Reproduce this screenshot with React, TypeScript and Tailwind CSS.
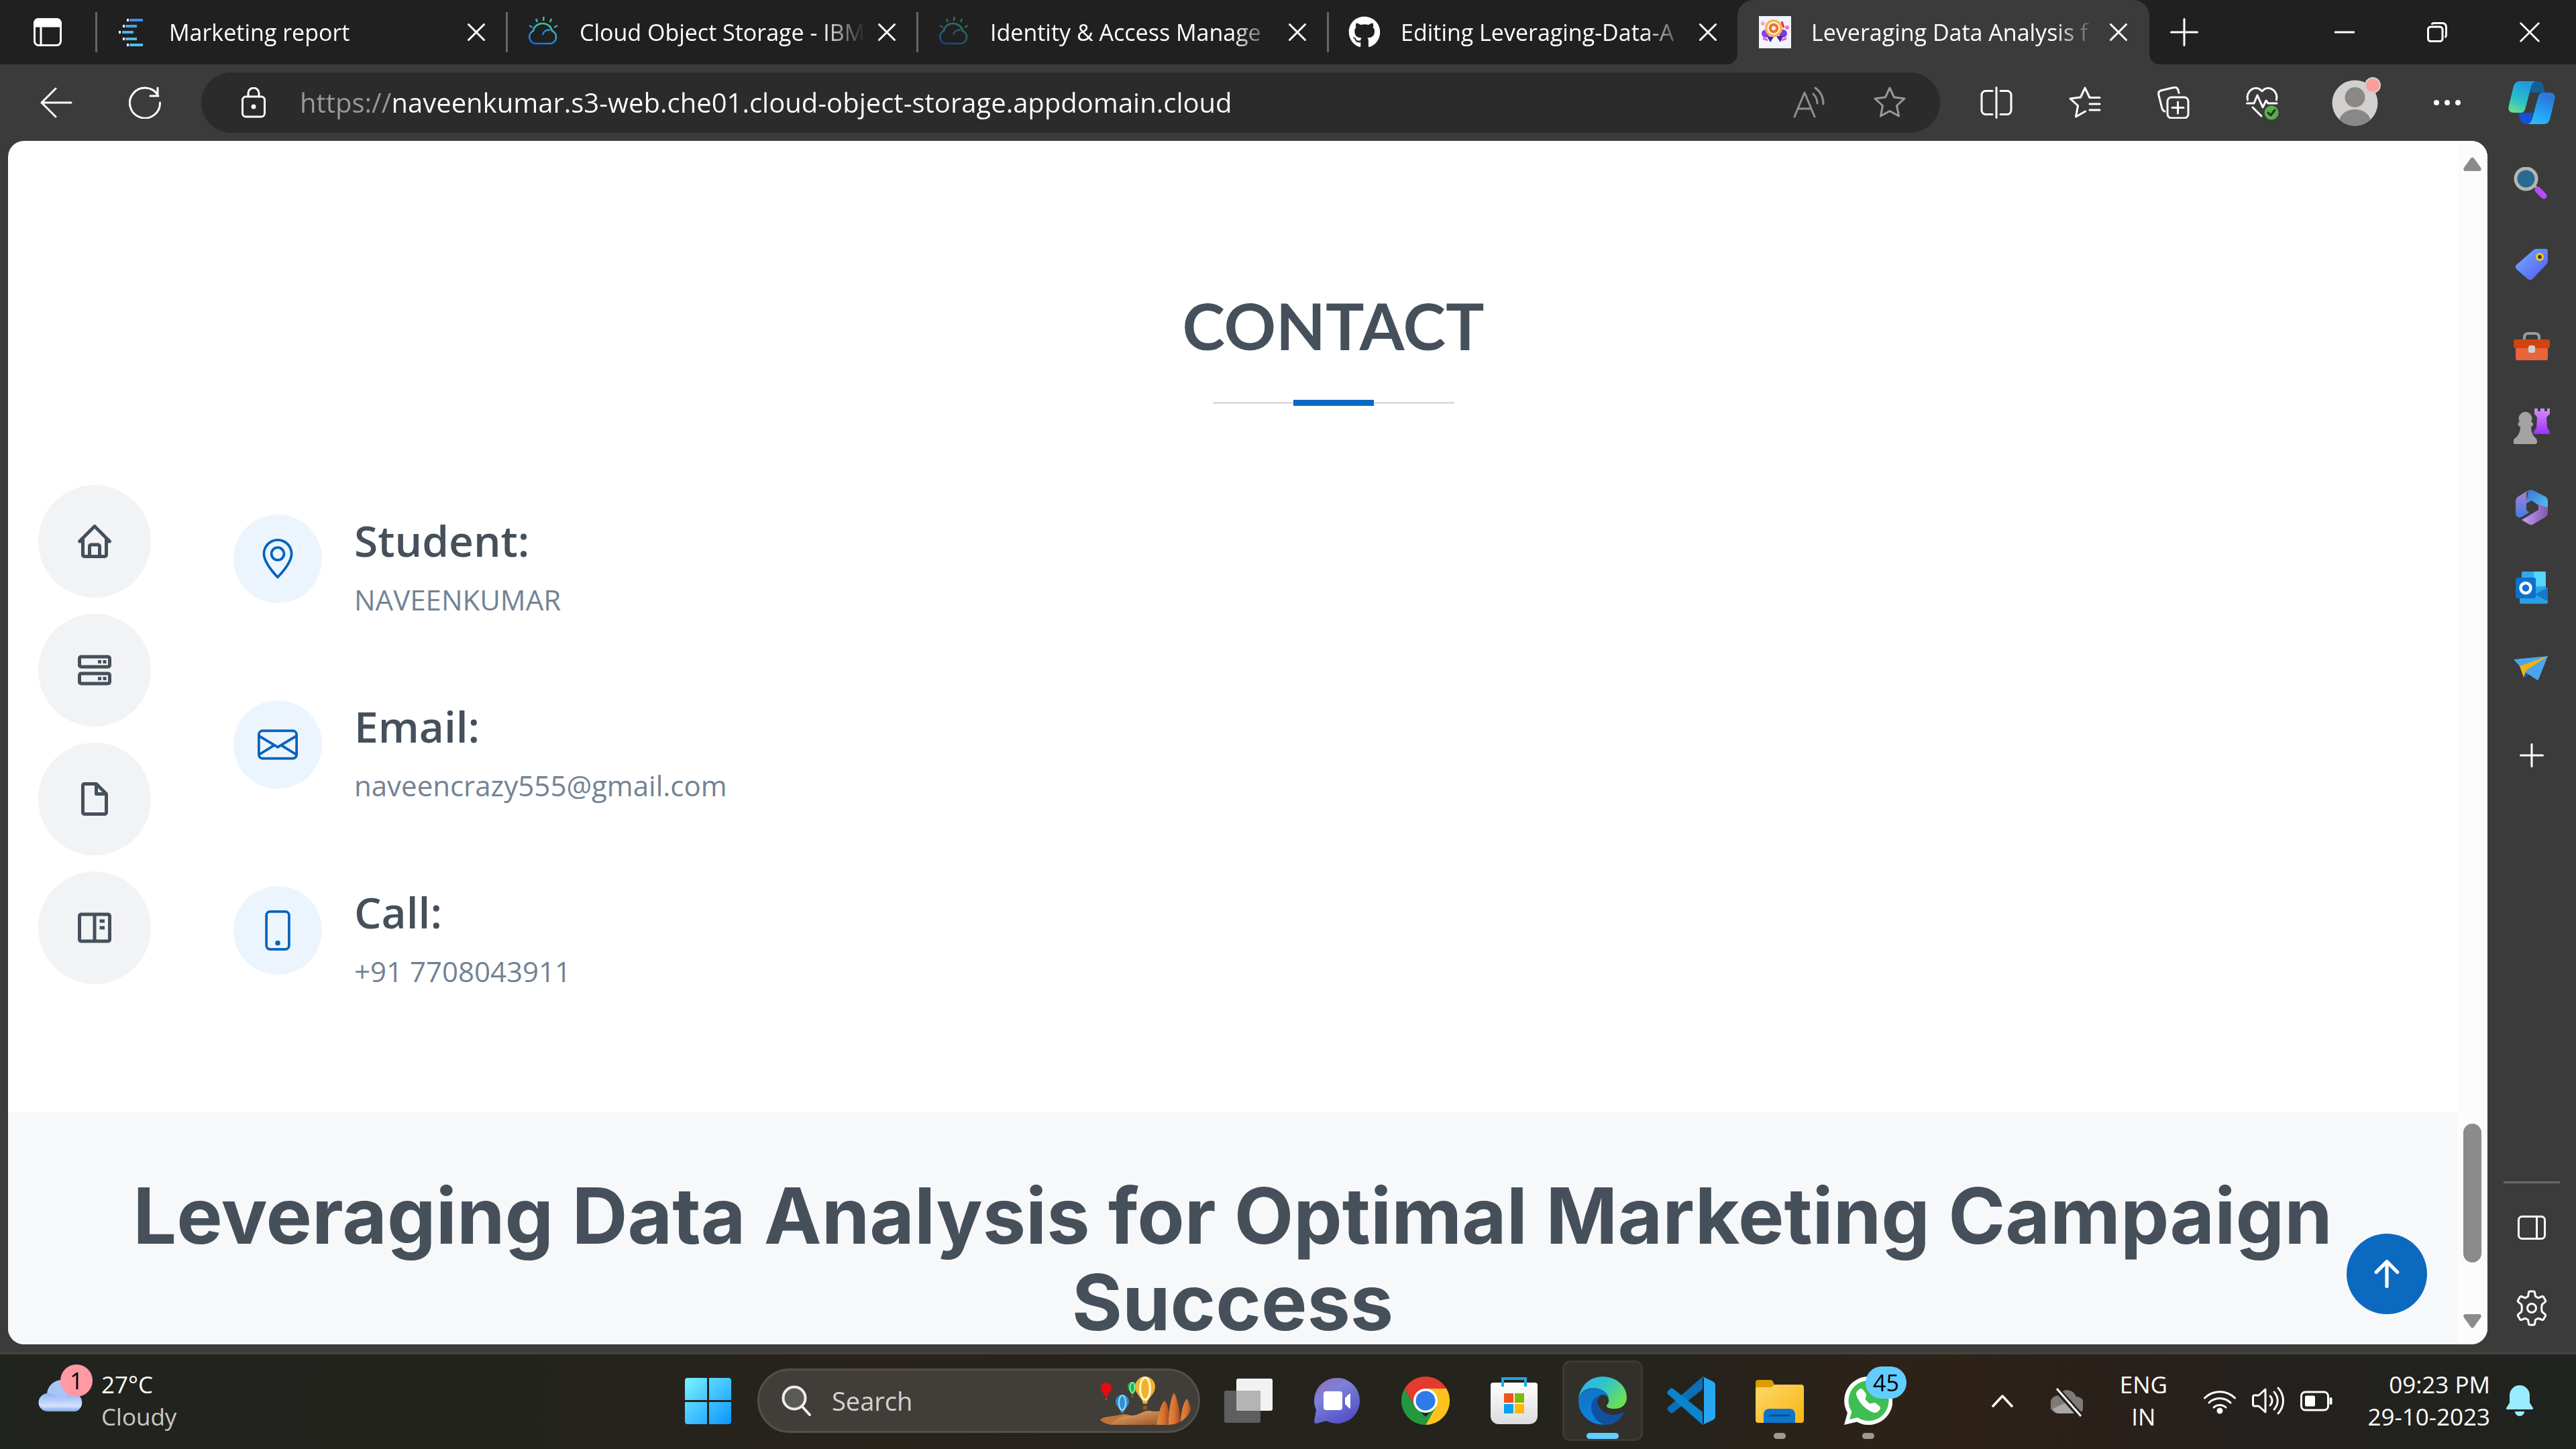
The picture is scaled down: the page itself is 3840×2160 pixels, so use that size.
import React from "react";
import { BiHome, BiServer, BiFileBlank, BiBookContent } from "react-icons/bi";
import { BsGeoAlt, BsEnvelope, BsPhone, BsArrowUpShort, BsTelephoneFill } from "react-icons/bs";
import { FaGithub } from "react-icons/fa";

type Kids = { children: React.ReactNode };

const line = { fill: "none", stroke: "currentColor", strokeWidth: 3, strokeLinecap: "round", strokeLinejoin: "round" } as const;

/* ---------- tab strip icons ---------- */

const WorkspaceIcon = () => (
  <svg className="h-[42px] w-[42px]" viewBox="0 0 42 42" {...line}>
    <rect x="1.5" y="1.5" width="39" height="39" rx="6" />
    <path d="M2 6a5 5 0 0 1 5-4h28a5 5 0 0 1 5 4v6H2z" fill="currentColor" />
    <path d="M11 12v28" />
  </svg>
);

const ReportFavicon = () => {
  const rows = [
    { y: 4, dot: 15, bar: 19, w: 20, c: "#3b8cf5" },
    { y: 13, dot: 9, bar: 13, w: 17, c: "#47a0f0" },
    { y: 22, dot: 3, bar: 8, w: 17, c: "#4bb3ea" },
    { y: 32, dot: 9, bar: 13, w: 17, c: "#4cbcea" },
    { y: 41, dot: 15, bar: 19, w: 20, c: "#45c3ee" },
  ];
  return (
    <svg className="h-12 w-12" viewBox="0 0 48 48">
      {rows.map((r) => (
        <g key={r.y}>
          <rect x={r.dot} y={r.y} width="3" height="4" fill="#fff" />
          <rect x={r.bar} y={r.y} width={r.w} height="4" fill={r.c} />
        </g>
      ))}
    </svg>
  );
};

const CloudFavicon = ({ id, dim }: { id: string; dim?: boolean }) => (
  <svg className={dim ? "h-12 w-12 opacity-50" : "h-12 w-12"} viewBox="0 0 48 48" fill="none" stroke={"url(#" + id + ")"} strokeWidth="2.6">
    <defs>
      <linearGradient id={id} x1="0" y1="1" x2=".4" y2="0" gradientUnits="objectBoundingBox">
        <stop offset="0" stopColor="#0f62fe" />
        <stop offset=".5" stopColor="#2f9bd0" />
        <stop offset="1" stopColor="#42be9a" />
      </linearGradient>
    </defs>
    <path d="M12 41a10 10 0 0 1-3-19C10 15 16 11 23 11s13 5 14 11a10 10 0 0 1-2 19z" />
    <path d="M23 28c1-5 5-8 11-7M24.500 1l-.5 6M13 4l2 5M36 4l-2 5M3 14l5 3M45 14l-5 3" />
  </svg>
);

const TargetFavicon = () => (
  <svg className="h-12 w-12" viewBox="0 0 48 48">
    <rect width="48" height="48" fill="#f2f4fd" />
    <circle cx="10" cy="26" r="6" fill="#8b3fe8" />
    <circle cx="36" cy="26" r="6" fill="#7a3be0" />
    <path d="M12 30l5 9 5-8zM26 30l6 9 4-10z" fill="#3a2a9a" />
    <circle cx="22" cy="18" r="13" fill="#f7b24c" />
    <circle cx="22" cy="18" r="9.500" fill="#fff" />
    <circle cx="22" cy="18" r="7.500" fill="#f0752d" />
    <circle cx="22" cy="18" r="3" fill="#fff" />
    <circle cx="42" cy="17" r="3" fill="#ff66b8" />
    <circle cx="6" cy="11" r="3" fill="#f5a9c8" />
    <path d="M34 8l3 9" stroke="#d8374a" strokeWidth="3" />
    <path d="M6 33l7 3M34 36l7-3" stroke="#e85ad0" strokeWidth="3" />
  </svg>
);

const Cross = ({ big }: { big?: boolean }) => (
  <svg className={big ? "h-[30px] w-[30px]" : "h-[26px] w-[26px]"} viewBox="0 0 26 26" {...line} strokeWidth={big ? 2.4 : 3}>
    <path d="M1.500 1.500l23 23M24.500 1.500l-23 23" />
  </svg>
);

const Plus = () => (
  <svg className="h-[42px] w-[42px]" viewBox="0 0 42 42" {...line}>
    <path d="M21 1.500v39M1.500 21h39" />
  </svg>
);

/* ---------- tabs ---------- */

const tabs = [
  { title: "Marketing report", icon: <ReportFavicon /> },
  { title: "Cloud Object Storage - IBM", icon: <CloudFavicon id="cf1" /> },
  { title: "Identity & Access Manage", icon: <CloudFavicon id="cf2" dim /> },
  { title: "Editing Leveraging-Data-A", icon: <FaGithub className="h-12 w-12 text-white" /> },
];

const TabBody = ({ title, icon }: { title: string; icon: React.ReactNode }) => (
  <>
    <button role="tab" className="flex min-w-0 flex-1 items-center gap-[30px] text-left">
      <span className="shrink-0">{icon}</span>
      <span className="min-w-0 flex-1 overflow-hidden whitespace-nowrap text-[34px] leading-[48px] [mask-image:linear-gradient(to_right,black_85%,transparent)]">
        {title}
      </span>
    </button>
    <button aria-label={"Close " + title} className="flex h-16 w-16 shrink-0 items-center justify-center">
      <Cross />
    </button>
  </>
);

const TabStrip = () => (
  <header className="flex h-24 shrink-0 items-center bg-[#202020] text-white">
    <button aria-label="Workspaces" className="flex w-[142px] shrink-0 items-center justify-center">
      <WorkspaceIcon />
    </button>
    {tabs.map((t) => (
      <div key={t.title} className="flex w-[612px] min-w-0 items-center">
        <span className="h-[60px] w-[3px] shrink-0 bg-[#666]" />
        <div className="flex min-w-0 flex-1 items-center pr-3 pl-[29px]">
          <TabBody {...t} />
        </div>
      </div>
    ))}
    <div className="relative flex h-full w-[614px] min-w-0 items-center rounded-t-[24px] bg-[#3b3b3b] pr-3.5 pl-8">
      <span className="absolute bottom-0 -left-4 h-4 w-4 bg-[radial-gradient(circle_at_0_0,transparent_16px,#3b3b3b_16px)]" />
      <TabBody title="Leveraging Data Analysis f" icon={<TargetFavicon />} />
      <span className="absolute -right-4 bottom-0 h-4 w-4 bg-[radial-gradient(circle_at_100%_0,transparent_16px,#3b3b3b_16px)]" />
    </div>
    <button aria-label="New tab" className="flex w-[104px] shrink-0 items-center justify-center">
      <Plus />
    </button>
    <div className="ml-auto flex shrink-0">
      <button aria-label="Minimize" className="flex h-24 w-[138px] items-center justify-center">
        <svg className="h-[30px] w-[30px]" viewBox="0 0 30 30" {...line}><path d="M1 15h28" /></svg>
      </button>
      <button aria-label="Restore" className="flex h-24 w-[138px] items-center justify-center">
        <svg className="h-[30px] w-[30px]" viewBox="0 0 30 30" {...line}>
          <rect x="1.500" y="7" width="21.500" height="21.500" rx="4" />
          <path d="M7.500 2.500c1-1 2-1 3-1H23a5.500 5.500 0 0 1 5.500 5.500v12c0 1 0 2-1 3" />
        </svg>
      </button>
      <button aria-label="Close window" className="flex h-24 w-[138px] items-center justify-center">
        <Cross big />
      </button>
    </div>
  </header>
);

/* ---------- toolbar ---------- */

const Tool = ({ label, children, className = "w-[132px]" }: Kids & { label: string; className?: string }) => (
  <button aria-label={label} className={"flex h-[90px] shrink-0 items-center justify-center " + className}>
    {children}
  </button>
);

const StarPath = "M24 2l6.500 14 15.500 2-11.500 10.500 3 15.500L24 36.500 10.500 44l3-15.500L2 18l15.500-2z";

const Copilot = () => (
  <svg className="h-[72px] w-[72px]" viewBox="0 0 72 72">
    <defs>
      <linearGradient id="cpa" x1="0" y1="1" x2=".4" y2="0">
        <stop offset="0" stopColor="#7be27c" />
        <stop offset=".45" stopColor="#2bc3c6" />
        <stop offset="1" stopColor="#1f9be0" />
      </linearGradient>
      <linearGradient id="cpb" x1="0" y1="1" x2=".4" y2="0">
        <stop offset="0" stopColor="#2bc4f5" />
        <stop offset=".5" stopColor="#23a0f5" />
        <stop offset="1" stopColor="#2c78dc" />
      </linearGradient>
    </defs>
    <path d="M38 4h7c5 0 7 3 8 7l3 10H34z" fill="#155f96" />
    <path d="M34 68h-7c-5 0-7-3-8-7l-3-10h22z" fill="#1450d8" />
    <path d="M18 4h24c-4 1-6 5-7 9l-9 33c-1 3-3 5-6 5H9c-6 0-9-4-7-11l7-29c2-5 5-7 9-7z" fill="url(#cpa)" />
    <path d="M54 68H30c4-1 6-5 7-9l9-33c1-3 3-5 6-5h11c6 0 9 4 7 11l-7 29c-2 5-5 7-9 7z" fill="url(#cpb)" />
  </svg>
);

const Toolbar = () => (
  <div className="flex h-[114px] shrink-0 items-center bg-[#3b3b3b] pr-1.5 pl-[18px] text-white">
    <Tool label="Back">
      <svg className="h-12 w-12" viewBox="0 0 48 48" {...line}><path d="M46 24H2M23 3L2 24l21 21" /></svg>
    </Tool>
    <Tool label="Refresh">
      <svg className="h-12 w-12" viewBox="0 0 48 48" {...line}><path d="M46.500 24A22.500 22.500 0 1 1 43 12.500V2M44 14H32" /></svg>
    </Tool>
    <div className="mx-[18px] flex h-[90px] min-w-0 flex-1 items-center rounded-full bg-[#2b2b2b] pr-[15px] pl-[42px]">
      <Tool label="Site information" className="w-[72px]">
        <svg className="h-[46px] w-9" viewBox="0 0 36 46" {...line}>
          <rect x="1.500" y="14" width="33" height="30" rx="5" />
          <path d="M10 14V9a8 8 0 0 1 16 0v5" />
          <circle cx="18" cy="29" r="2" fill="currentColor" />
        </svg>
      </Tool>
      <input
        aria-label="Address"
        defaultValue="https://naveenkumar.s3-web.che01.cloud-object-storage.appdomain.cloud"
        className="ml-[33px] min-w-0 flex-1 bg-[linear-gradient(to_right,#999999_137px,#ffffff_137px)] bg-clip-text text-[40px] leading-[56px] text-transparent outline-none"
      />
      <Tool label="Read aloud" className="w-[120px] text-[#8f8f8f]">
        <svg className="h-12 w-12" viewBox="0 0 48 48" {...line}>
          <path d="M2 45L17 9l15 36M7 33h20M30 11c4 4 6 9 6 14M33 2c7 5 12 13 12 24" />
        </svg>
      </Tool>
      <Tool label="Add to favorites" className="w-[120px] text-[#9a9a9a]">
        <svg className="h-12 w-12" viewBox="0 0 48 48" {...line}><path d={StarPath} /></svg>
      </Tool>
    </div>
    <Tool label="Split screen">
      <svg className="h-12 w-12" viewBox="0 0 48 48" {...line}>
        <path d="M24 1.500v45M18 6.500H8a6 6 0 0 0-6 6v23a6 6 0 0 0 6 6h10M30 6.500h10a6 6 0 0 1 6 6v23a6 6 0 0 1-6 6H30" />
      </svg>
    </Tool>
    <Tool label="Favorites">
      <svg className="h-12 w-12" viewBox="0 0 48 48" {...line}>
        <path d="M46 16.500H31L24 2l-6.500 14L2 18l11.500 10.500L10.500 45l14-8M31 26h15M31 35h15" />
      </svg>
    </Tool>
    <Tool label="Collections">
      <svg className="h-12 w-12" viewBox="0 0 48 48" {...line}>
        <path d="M11 37c-2 0-3-2-4-4L2 13c-1-4 0-6 3-7l19-4.500c4-1 6 .5 7 4l1 4" />
        <rect x="15" y="16" width="31" height="31" rx="6" />
        <path d="M30.500 23v17M22 31.500h17" />
      </svg>
    </Tool>
    <Tool label="Browser essentials">
      <svg className="h-[51px] w-[51px]" viewBox="-1 0 51 51" {...line}>
        <path d="M2.500 21C-1 8 14-3 24 8 34-3 49 8 45.500 21M1.500 26H12l5-12 8 18 5-10 3 4h13M10 32l13 13" />
        <circle cx="38" cy="40" r="10.500" fill="#57ae4a" stroke="none" />
        <path d="M33 40l4 4 6-8" stroke="#2b2b2b" />
      </svg>
    </Tool>
    <Tool label="Profile" className="w-36">
      <span className="relative">
        <svg className="h-[69px] w-[69px]" viewBox="0 0 69 69">
          <clipPath id="av"><circle cx="34.500" cy="34.500" r="34" /></clipPath>
          <circle cx="34.500" cy="34.500" r="34" fill="#d2d0ce" />
          <g clipPath="url(#av)" fill="#8a8886">
            <circle cx="34.500" cy="26" r="15" />
            <ellipse cx="34.500" cy="64" rx="24" ry="20" />
          </g>
        </svg>
        <span className="absolute -top-1 -right-1 h-6 w-6 rounded-full border-2 border-[#d2d0ce] bg-[#fb9d98]" />
      </span>
    </Tool>
    <Tool label="Settings and more">
      <svg className="h-12 w-12" viewBox="0 0 48 48" fill="currentColor"><circle cx="8" cy="24" r="4" /><circle cx="24" cy="24" r="4" /><circle cx="40" cy="24" r="4" /></svg>
    </Tool>
    <Tool label="Copilot" className="w-[120px]"><Copilot /></Tool>
  </div>
);

/* ---------- web page ---------- */

const navItems = [
  { label: "Home", Icon: BiHome },
  { label: "Services", Icon: BiServer },
  { label: "Resume", Icon: BiFileBlank },
  { label: "Portfolio", Icon: BiBookContent },
];

const contacts = [
  { title: "Student:", text: "NAVEENKUMAR", Icon: BsGeoAlt },
  { title: "Email:", text: "naveencrazy555@gmail.com", Icon: BsEnvelope },
  { title: "Call:", text: "+91 7708043911", Icon: BsPhone },
];

const WebPage = () => (
  <main className="flex min-w-0 flex-1 overflow-hidden rounded-[24px] bg-white">
    <div className="relative flex min-w-0 flex-1 flex-col text-[#45505b]">
      <div className="flex shrink-0">
        <nav aria-label="Sections" className="flex w-[300px] shrink-0 flex-col gap-6 pt-[513px] pl-[45px]">
          {navItems.map(({ label, Icon }) => (
            <a key={label} href="#contact" aria-label={label} className="flex h-[168px] w-[168px] items-center justify-center rounded-full bg-[#f2f3f5]">
              <Icon className="h-[60px] w-[60px]" />
            </a>
          ))}
        </nav>
        <section id="contact" className="flex-1 pt-[217px] pb-[180px]">
          <h2 className="text-center font-[Lato,sans-serif] text-[96px] leading-[116px] font-bold">CONTACT</h2>
          <div className="mx-auto mt-[53px] flex h-[9px] w-[360px] items-center justify-center bg-[linear-gradient(#dddddd,#dddddd)] bg-[length:100%_3px] bg-center bg-no-repeat">
            <span className="h-full w-[120px] bg-[#0c69c0]" />
          </div>
          <ul className="mt-[162px] flex flex-col gap-[120px] pl-9">
            {contacts.map(({ title, text, Icon }) => (
              <li key={title} className="flex gap-12">
                <span className="flex h-[132px] w-[132px] shrink-0 items-center justify-center rounded-full bg-[#ecf5fe] text-[#0563bb]">
                  <Icon className="h-[60px] w-[60px]" />
                </span>
                <div>
                  <h4 className="text-[64px] leading-[78px] font-semibold">{title}</h4>
                  <p className="mt-[19px] text-[42px] leading-[60px] text-[#728394]">{text}</p>
                </div>
              </li>
            ))}
          </ul>
        </section>
      </div>
      <footer className="flex-1 overflow-hidden bg-[#f7f8fa] px-9 pt-[90px]">
        <h3 className="text-center font-[Inter,sans-serif] text-[115px] leading-[129px] font-bold">
          Leveraging Data Analysis for Optimal Marketing Campaign Success
        </h3>
      </footer>
      <a href="#top" aria-label="Back to top" className="absolute right-[45px] bottom-[45px] flex h-[120px] w-[120px] items-center justify-center rounded-full bg-[#0c69c0] text-white">
        <BsArrowUpShort className="h-[84px] w-[84px]" />
      </a>
    </div>
    <div className="flex w-[45px] shrink-0 flex-col items-center bg-[#fcfcfc] py-6 text-[#8b8b8b]">
      <svg className="h-[21px] w-[27px]" viewBox="0 0 27 21" fill="currentColor"><path d="M11 2c1.500-2 3.500-2 5 0l10 14c1.500 2.500.500 5-2 5H3c-2.500 0-3.500-2.500-2-5z" /></svg>
      <span className="mt-auto mb-[77px] h-[207px] w-[27px] rounded-full bg-[#8b8b8b]" />
      <svg className="h-[21px] w-[27px]" viewBox="0 0 27 21" fill="currentColor"><path d="M11 19c1.500 2 3.500 2 5 0L26 5c1.500-2.500.500-5-2-5H3C.500 0-.500 2.500 1 5z" /></svg>
    </div>
  </main>
);

/* ---------- browser side bar ---------- */

const SearchGlass = () => (
  <svg className="h-[54px] w-[54px]" viewBox="0 3 54 54">
    <path d="M31 31l8 7" stroke="#9a9a9a" strokeWidth="4" />
    <path d="M36 37l9 9" stroke="#b44dfb" strokeWidth="9" strokeLinecap="round" />
    <circle cx="18.500" cy="20.500" r="15.500" fill="#2a6a90" stroke="#b5b5b3" strokeWidth="5" />
  </svg>
);
const PriceTag = () => (
  <svg className="h-[54px] w-[54px]" viewBox="0 0 54 54">
    <defs><linearGradient id="tg" x1="0" y1="0" x2="1" y2="1"><stop offset="0" stopColor="#76aefc" /><stop offset="1" stopColor="#5257f5" /></linearGradient></defs>
    <path d="M28 5c2-2 4-3 7-3h12c3 0 4 1 4 4v13c0 3-1 5-3 7L29 46c-3 3-6 3-9 0L5 33c-3-3-3-5 0-8z" fill="url(#tg)" />
    <circle cx="39" cy="14" r="4.500" fill="#3b3b3b" stroke="#f7cf10" strokeWidth="3" />
  </svg>
);
const Toolbox = () => (
  <svg className="h-[54px] w-[54px]" viewBox="0 0 54 54">
    <path d="M16 17v-3c0-4 2-6 6-6h10c4 0 6 2 6 6v3" fill="none" stroke="#9d9b99" strokeWidth="4" />
    <rect x="3" y="20" width="48" height="28" rx="3" fill="#e8643a" />
    <rect y="17" width="54" height="13" rx="3" fill="#d0440e" />
    <rect x="22" y="26" width="10" height="11" rx="3" fill="#cfcfcf" />
  </svg>
);
const Chess = () => (
  <svg className="h-[54px] w-[54px]" viewBox="0 0 54 54">
    <defs><linearGradient id="rk" x1="0" y1="0" x2="0" y2="1"><stop offset="0" stopColor="#da8cfb" /><stop offset="1" stopColor="#9a33fb" /></linearGradient></defs>
    <path d="M31 0h5v4h4V0h6v4h4V0h4v8l-5 5 1 16c2 2 4 4 4 9H30c0-5 2-7 4-9l1-16-4-5z" fill="url(#rk)" />
    <path d="M17 5a10 10 0 0 1 9 15c3 0 5 6 0 7 0 8 3 14 8 18 2 5 1 8-2 8H2c-3 0-3-5-1-8 6-4 9-10 9-18-5-1-4-7-1-7A10 10 0 0 1 17 5z" fill="#a3a3a1" />
  </svg>
);
const M365 = () => (
  <svg className="h-[54px] w-[54px]" viewBox="0 0 54 54">
    <defs>
      <linearGradient id="ma" x1="0" y1="0" x2="0" y2="1"><stop offset="0" stopColor="#b07fd8" /><stop offset="1" stopColor="#3f7fe0" /></linearGradient>
      <linearGradient id="mb" x1="0" y1="0" x2="1" y2="1"><stop offset="0" stopColor="#3f6fd0" /><stop offset="1" stopColor="#52c8f8" /></linearGradient>
      <linearGradient id="mc" x1="0" y1="0" x2="1" y2="0"><stop offset="0" stopColor="#c99af5" /><stop offset="1" stopColor="#7f5aa8" /></linearGradient>
    </defs>
    <path d="M22 2l5-1 20 10c3 2 4 4 4 7v14L37 24l-10-7-9 5z" fill="url(#mb)" />
    <path d="M51 27v8c0 3-1 5-4 7L30 52c-3 2-5 2-8 0l-10-6 25-15v-8z" fill="url(#mc)" />
    <path d="M22 2L7 11c-3 2-4 4-4 7v18c0 6 6 8 10 5l10-6-4-4V6z" fill="url(#ma)" />
  </svg>
);
const Outlook = () => (
  <svg className="h-[54px] w-[54px]" viewBox="0 0 54 54">
    <rect x="12" y="3" width="36" height="30" rx="2" fill="#33a9ec" />
    <path d="M30 3h16a2 2 0 0 1 2 2v20H30z" fill="#57d5fa" />
    <path d="M9 30l42-3v21a3 3 0 0 1-3 3H12a3 3 0 0 1-3-3z" fill="#2a9fe6" />
    <path d="M51 27v20L32 37z" fill="#1678c8" />
    <rect x="3" y="12" width="30" height="31" rx="3" fill="#0d6fd0" />
    <circle cx="18" cy="27.500" r="7.500" fill="none" stroke="#fff" strokeWidth="4.500" />
  </svg>
);
const Plane = () => (
  <svg className="h-[54px] w-[54px]" viewBox="0 0 54 54">
    <path d="M16 30v12l14-11z" fill="#1558b0" />
    <path d="M0 14L51 9 37 44c-1 1-2 1-3 0L19 34 9 24z" fill="#4aa5ee" />
    <path d="M9 24L51 9 19 30l-4 11z" fill="#f5b30b" />
  </svg>
);

const sideApps = [
  { label: "Search", icon: <SearchGlass /> },
  { label: "Shopping", icon: <PriceTag /> },
  { label: "Tools", icon: <Toolbox /> },
  { label: "Games", icon: <Chess /> },
  { label: "Microsoft 365", icon: <M365 /> },
  { label: "Outlook", icon: <Outlook /> },
  { label: "Drop", icon: <Plane /> },
];

const SideButton = ({ label, children }: Kids & { label: string }) => (
  <button aria-label={label} className="flex h-[120px] w-full shrink-0 items-center justify-center text-white">{children}</button>
);

const SideBar = () => (
  <aside className="-mb-3 flex w-[132px] shrink-0 flex-col items-center pt-1.5">
    {sideApps.map((a) => <SideButton key={a.label} label={a.label}>{a.icon}</SideButton>)}
    <div className="mt-2.5 w-full">
      <SideButton label="Customize">
        <svg className="h-9 w-9" viewBox="0 0 36 36" {...line}><path d="M18 1.500v33M1.500 18h33" /></svg>
      </SideButton>
    </div>
    <span className="mt-auto h-[3px] w-[84px] bg-[#696969]" />
    <div className="w-full pt-1.5 pb-1.5">
      <SideButton label="Toggle sidebar">
        <svg className="h-9 w-[42px]" viewBox="0 0 42 36" {...line}><rect x="1.500" y="1.500" width="39" height="33" rx="5" /><path d="M28.500 2v32" /></svg>
      </SideButton>
      <SideButton label="Settings">
        <svg className="h-[54px] w-[54px]" viewBox="0 0 54 54" {...line}>
          <path d="M21.500 9.500l1-6q.3-1.500 1.800-1.500h5.400q1.500 0 1.800 1.500l1 6 4 2.300 6-2.300q1.300-.4 2 .8l3 5.200q.7 1.200-.4 2.200l-4.800 4q-1.500 5.300 0 10.600l4.800 4q1.100 1 .4 2.200l-3 5.200q-.7 1.200-2 .8l-6-2.300-4 2.300-1 6q-.3 1.500-1.800 1.500h-5.400q-1.500 0-1.800-1.500l-1-6-4-2.300-6 2.300q-1.300.4-2-.8l-3-5.200q-.7-1.200.4-2.200l4.800-4q1.500-5.300 0-10.600l-4.800-4q-1.100-1-.4-2.200l3-5.200q.7-1.200 2-.8l6 2.300z" />
          <circle cx="27" cy="27" r="6.500" />
        </svg>
      </SideButton>
    </div>
  </aside>
);

/* ---------- task bar ---------- */

const AppButton = ({ label, children, active, open }: Kids & { label: string; active?: boolean; open?: boolean }) => (
  <button
    aria-label={label}
    className={
      "relative flex h-[120px] w-[120px] shrink-0 items-center justify-center rounded-[12px] " +
      (active ? "border-[3px] border-[#3b3a35] bg-[#31302b]" : "")
    }
  >
    {children}
    {active && <span className="absolute bottom-0 h-[9px] w-12 rounded-full bg-[#62cdff]" />}
    {open && <span className="absolute bottom-[3px] h-[9px] w-[18px] rounded-full bg-[#9d9995]" />}
  </button>
);

const StartLogo = () => (
  <svg className="h-[69px] w-[69px]" viewBox="0 0 69 69">
    <defs><linearGradient id="wn" x1="0" y1="0" x2="1" y2="1" gradientUnits="objectBoundingBox"><stop offset="0" stopColor="#7bf3ff" /><stop offset="1" stopColor="#0a95ff" /></linearGradient></defs>
    <path d="M4 0h29v33H0V4a4 4 0 0 1 4-4zM36 0h29a4 4 0 0 1 4 4v29H36zM0 36h33v33H4a4 4 0 0 1-4-4zM36 36h33v29a4 4 0 0 1-4 4H36z" fill="url(#wn)" />
  </svg>
);

const Balloon = ({ x, y, r, c, s }: { x: number; y: number; r: number; c: string; s?: string }) => (
  <g>
    <path d={`M${x - r} ${y}a${r} ${r} 0 0 1 ${2 * r} 0c0 ${r * 0.8}-${r * 0.7} ${r}-${r * 0.8} ${r * 1.7}h-${r * 0.4}C${x - r * 0.3} ${y + r} ${x - r} ${y + r * 0.8} ${x - r} ${y}z`} fill={c} />
    {s && <ellipse cx={x} cy={y + r * 0.2} rx={r * 0.5} ry={r * 1.1} fill="none" stroke={s} strokeWidth={r * 0.22} />}
    <rect x={x - r * 0.2} y={y + r * 1.9} width={r * 0.4} height={r * 0.4} fill="#8a5a14" />
  </g>
);

const Balloons = () => (
  <svg className="h-[72px] w-[138px]" viewBox="0 0 138 72">
    <defs>
      <linearGradient id="rc" x1="0" y1="0" x2="1" y2="1"><stop offset="0" stopColor="#f3b07a" /><stop offset="1" stopColor="#8f4c1e" /></linearGradient>
      <linearGradient id="rt" x1="0" y1="0" x2="1" y2="0"><stop offset="0" stopColor="#e08a48" /><stop offset=".5" stopColor="#d6702c" /><stop offset="1" stopColor="#8f3f18" /></linearGradient>
      <clipPath id="rb"><path d="M0 0h138v36a36 36 0 0 1-36 36H20C10 72 3 68 0 64z" /></clipPath>
    </defs>
    <Balloon x={9} y={17} r={8} c="#e80a10" />
    <Balloon x={33} y={37} r={10} c="#2f8fd0" s="#9ad6f5" />
    <Balloon x={48} y={15} r={7} c="#16b84a" s="#a5f0b8" />
    <Balloon x={67} y={15} r={15} c="#eeb32c" s="#fff2c8" />
    <g clipPath="url(#rb)">
      <path d="M0 64c8-6 22-4 34-8 10-1 20 6 28 16H0z" fill="#c07538" />
      <path d="M14 72c14-12 22-14 34-14 10 0 16-8 26-7 6 2 12 0 18 1l16 20z" fill="url(#rc)" />
      <path d="M84 72c3-18 7-32 12-36 5 4 7 18 10 36z" fill="url(#rt)" />
      <path d="M102 72c0-24 4-42 8-48 5 8 9 26 11 48z" fill="url(#rt)" />
      <path d="M120 72c0-22 5-34 9-39 5 6 8 20 9 39z" fill="url(#rt)" />
    </g>
  </svg>
);

const TaskView = () => (
  <svg className="h-[72px] w-[72px]" viewBox="0 0 72 72">
    <rect x="18" y="3" width="54" height="48" rx="3" fill="#f2f2f2" />
    <rect y="21" width="54" height="48" rx="3" fill="#5e5e60" />
    <path d="M18 21h33a3 3 0 0 1 3 3v27H18z" fill="#b4b4b4" />
  </svg>
);

const Chat = () => (
  <svg className="h-[68px] w-[68px]" viewBox="0 0 68 68">
    <defs><linearGradient id="ch" x1="0" y1="0" x2=".6" y2="1"><stop offset="0" stopColor="#9a6bb0" /><stop offset=".4" stopColor="#7c82d8" /><stop offset="1" stopColor="#5551c8" /></linearGradient></defs>
    <path d="M34 0a34 34 0 1 1-16 64L4 68c-3 0-4-1-4-4l3-16A34 34 0 0 1 34 0z" fill="url(#ch)" />
    <rect x="14" y="20" width="28" height="28" rx="4" fill="#fff" />
    <path d="M46 30l6-6c1-1 2-.500 2 1v19c0 1.500-1 2-2 1l-6-6z" fill="#fff" />
  </svg>
);

const Chrome = () => (
  <svg className="h-[72px] w-[72px]" viewBox="0 0 72 72">
    <path d="M36 18h31.200A36 36 0 0 1 36 72l15.600-27z" fill="#fcc31e" />
    <path d="M4.800 18A36 36 0 0 1 67.200 18H36L20.400 45z" fill="#e33b2e" />
    <path d="M4.800 18L20.400 45 36 60 51.600 45 36 72A36 36 0 0 1 4.800 18z" fill="#24983f" />
    <circle cx="36" cy="36" r="18" fill="#fff" />
    <circle cx="36" cy="36" r="14.500" fill="#2c7be8" />
  </svg>
);

const Store = () => (
  <svg className="h-[72px] w-[72px]" viewBox="0 0 72 72">
    <defs><linearGradient id="st" x1="0" y1="0" x2="0" y2="1"><stop offset="0" stopColor="#ffffff" /><stop offset="1" stopColor="#dcdcdc" /></linearGradient></defs>
    <path d="M1 13a4 4 0 0 1 4-4h62a4 4 0 0 1 4 4v46a12 12 0 0 1-12 12H13A12 12 0 0 1 1 59z" fill="url(#st)" />
    <path d="M19 15V3h34v12" fill="none" stroke="#1ba7ee" strokeWidth="4" />
    <path d="M21 25h14v14H21z" fill="#f4511e" /><path d="M37 25h14v14H37z" fill="#80ba01" />
    <path d="M21 41h14v14H21z" fill="#02a4ef" /><path d="M37 41h14v14H37z" fill="#ffb902" />
  </svg>
);

const Edge = () => (
  <svg className="h-[72px] w-[72px]" viewBox="0 0 72 72">
    <defs>
      <linearGradient id="ea" x1="0" y1="0" x2="1" y2=".6"><stop offset="0" stopColor="#2fb0f5" /><stop offset=".5" stopColor="#30c5c8" /><stop offset="1" stopColor="#6be056" /></linearGradient>
      <linearGradient id="eb" x1="0" y1="0" x2=".4" y2="1"><stop offset="0" stopColor="#1272c0" /><stop offset="1" stopColor="#0a84e0" /></linearGradient>
    </defs>
    <path d="M0 34C2 14 17 0 36 0c20 0 36 14 36 31 0 11-8 17-18 17-8 0-13-2-12-5 2-3 4-5 3-9C43 24 34 17 22 17 10 17 2 24 0 34z" fill="url(#ea)" />
    <path d="M0 36c0-11 9-19 22-19 13 0 22 7 23 15-4-7-14-6-18 0-8 12 0 30 15 39C20 75 0 58 0 36z" fill="url(#eb)" />
    <path d="M36 27c-5 3-8 8-8 10 2 12 12 20 24 20 5 0 9-1 13-3 2-1 3 0 2 2-6 10-15 16-26 16-14-3-22-15-22-27 0-9 6-16 17-18z" fill="#10519f" />
  </svg>
);

const VsCode = () => (
  <svg className="h-[72px] w-[72px]" viewBox="0 0 72 72">
    <path d="M53 0v19L9 54c-1 1-2 1-4 0l-4-4c-1-1-1-3 0-4z" fill="#0a6fb5" />
    <path d="M53 72V53L9 18c-1-1-2-1-4 0l-4 4c-1 1-1 3 0 4z" fill="#0a84cc" />
    <path d="M53 0l15 7c3 1.500 4 3 4 6v46c0 3-1 4.500-4 6l-15 7c2-2 2-3 2-5V5c0-2 0-3-2-5z" fill="#27a6f2" />
  </svg>
);

const Explorer = () => (
  <svg className="h-[72px] w-[72px]" viewBox="0 0 72 72">
    <defs><linearGradient id="fo" x1="0" y1="0" x2="1" y2="1"><stop offset="0" stopColor="#ffd76a" /><stop offset="1" stopColor="#f8b612" /></linearGradient></defs>
    <path d="M0 9a4 4 0 0 1 4-4h18c3 0 4 2 6 7H56v14H0z" fill="#dd9c06" />
    <path d="M0 19a3 3 0 0 1 3-3h20l6-4h39a4 4 0 0 1 4 4v49a4 4 0 0 1-4 4H4a4 4 0 0 1-4-4z" fill="url(#fo)" />
    <path d="M12 69V56a8 8 0 0 1 8-8h31a8 8 0 0 1 8 8v13z" fill="#0c76cc" />
    <path d="M22 58h28" stroke="#0a4f94" strokeWidth="3" strokeLinecap="round" />
  </svg>
);

const WhatsApp = () => (
  <span className="relative">
    <svg className="h-[72px] w-[72px]" viewBox="0 0 72 72">
      <path d="M36 0a36 36 0 1 1-17 67.500L0 72l5-18A36 36 0 0 1 36 0z" fill="#fff" />
      <path d="M36 6a30 30 0 1 1-16 55L8 64l3.500-11.500A30 30 0 0 1 36 6z" fill="#3fbf51" />
    </svg>
    <BsTelephoneFill className="absolute top-[18px] left-[18px] h-9 w-9 text-white" />
    <span className="absolute -top-[15px] left-8 flex h-12 w-[61px] items-center justify-center rounded-full bg-[#62cdff] text-[34px] leading-[48px] text-black">45</span>
  </span>
);

const Weather = () => (
  <button className="flex items-center gap-[22px] justify-self-start pl-[57px] text-left text-[35px] leading-[48px]">
    <span className="relative">
      <svg className="h-[72px] w-[72px]" viewBox="0 0 72 72">
        <defs><linearGradient id="wc" x1="0" y1="0" x2="0" y2="1"><stop offset="0" stopColor="#8fb4f5" /><stop offset=".7" stopColor="#d3e2fb" /><stop offset="1" stopColor="#7ea4ea" /></linearGradient></defs>
        <circle cx="35" cy="27" r="22" fill="#a9c5f7" />
        <path d="M14 25c10 0 18 5 20 13 3-8 10-13 20-13a14 14 0 0 1 2 27H14a13.500 13.500 0 0 1 0-27z" fill="url(#wc)" />
      </svg>
      <span className="absolute -top-[18px] left-[33px] flex h-12 w-12 items-center justify-center rounded-full bg-[#ff99a4] text-[34px] text-black">1</span>
    </span>
    <span className="flex flex-col">
      <span>27°C</span>
      <span className="text-[#c9c9c6]">Cloudy</span>
    </span>
  </button>
);

const Tray = () => (
  <div className="flex items-center justify-self-end pr-16 text-[35px] leading-[48px]">
    <button aria-label="Show hidden icons" className="flex h-24 w-24 items-center justify-center">
      <svg className="h-5 w-8" viewBox="0 0 32 20" {...line} strokeWidth="3.500"><path d="M2 18L16 3l14 15" /></svg>
    </button>
    <button aria-label="OneDrive not signed in" className="flex h-24 w-24 items-center justify-center">
      <svg className="h-12 w-12" viewBox="0 0 48 48">
        <path d="M12 16a14 14 0 0 1 26 2 11 11 0 0 1 0 25H12a13 13 0 0 1 0-27z" fill="#7d7a78" />
        <path d="M3 36l19-9 21 14c-2 2-4 2-5 2H12c-4 0-7-3-9-7z" fill="#a9a7a5" />
        <path d="M8 6l36 40" stroke="#25211e" strokeWidth="9" /><path d="M9 6l36 41" stroke="#fff" strokeWidth="3" />
      </svg>
    </button>
    <button className="flex w-[132px] flex-col items-center"><span>ENG</span><span>IN</span></button>
    <button aria-label="Network, volume and battery" className="mx-3 flex h-24 items-center gap-6 px-3">
      <svg className="h-12 w-12" viewBox="0 0 48 48" {...line}>
        <path d="M1.500 20a32 32 0 0 1 45 0M8 27a23 23 0 0 1 32 0M15 34a13 13 0 0 1 18 0" /><circle cx="24" cy="39" r="3" fill="currentColor" />
      </svg>
      <svg className="h-12 w-12" viewBox="0 0 48 48" {...line}>
        <path d="M1.500 18v12c0 1 1 2 2 2H10l10 9V7L10 16H3.500c-1 0-2 1-2 2zM27 17c4 4 4 10 0 14M33 11c7 8 7 18 0 26M39 5c10 11 10 27 0 38" />
      </svg>
      <svg className="h-12 w-12" viewBox="0 0 48 48" {...line}>
        <rect x="1.500" y="11" width="40" height="27" rx="6" /><rect x="7" y="16.500" width="15" height="16" rx="2" fill="currentColor" stroke="none" /><path d="M45.500 21v7" strokeWidth="4" />
      </svg>
    </button>
    <button className="ml-7 flex flex-col items-end"><span>09:23 PM</span><span>29-10-2023</span></button>
    <button aria-label="Notifications" className="ml-6 flex h-24 w-10 items-center">
      <svg className="h-[46px] w-10" viewBox="0 0 40 46" fill="#99ebff">
        <path d="M5 15a15 15 0 0 1 30 0v11l5 8c.500 1.500-.500 2-2 2H2c-1.500 0-2.500-.500-2-2l5-8z" /><path d="M13 39h14a7 7 0 0 1-14 0z" />
      </svg>
    </button>
  </div>
);

const TaskBar = () => (
  <div className="grid h-36 shrink-0 grid-cols-[1fr_auto_1fr] items-center bg-[linear-gradient(to_right,#21231e,#23231d_20%,#29231c_34%,#24231c_50%,#24231d_63%,#2e2217_76%,#2a201a_81%,#24211e_88%,#20231f)] text-white shadow-[inset_0_3px_0_#46443e]">
    <Weather />
    <div className="flex items-center gap-3">
      <AppButton label="Start"><StartLogo /></AppButton>
      <label className="ml-0.5 flex h-24 w-[660px] items-center rounded-full border-[3px] border-[#53504b] bg-[#413e3a] pr-2 pl-8">
        <svg className="h-12 w-12 shrink-0" viewBox="0 0 48 48" fill="none" stroke="#eceeef" strokeWidth="4" strokeLinecap="round">
          <circle cx="20" cy="20" r="16.500" fill="#5c5a57" /><path d="M32 33l11 12" />
        </svg>
        <input type="text" aria-label="Search" placeholder="Search" className="ml-7 min-w-0 flex-1 text-[38px] leading-[56px] outline-none placeholder:text-[#d5d3d0]" />
        <Balloons />
      </label>
      <AppButton label="Task view"><TaskView /></AppButton>
      <AppButton label="Chat"><Chat /></AppButton>
      <AppButton label="Chrome"><Chrome /></AppButton>
      <AppButton label="Microsoft Store"><Store /></AppButton>
      <AppButton label="Microsoft Edge" active><Edge /></AppButton>
      <AppButton label="Visual Studio Code"><VsCode /></AppButton>
      <AppButton label="File Explorer" open><Explorer /></AppButton>
      <AppButton label="WhatsApp" open><WhatsApp /></AppButton>
    </div>
    <Tray />
  </div>
);

export default function App() {
  return (
    <div id="top" className="flex h-screen w-full flex-col overflow-hidden bg-[#3b3b3b] font-['Open_Sans',sans-serif]">
      <TabStrip />
      <Toolbar />
      <div className="flex min-h-0 flex-1 pb-3 pl-3">
        <WebPage />
        <SideBar />
      </div>
      <TaskBar />
    </div>
  );
}
